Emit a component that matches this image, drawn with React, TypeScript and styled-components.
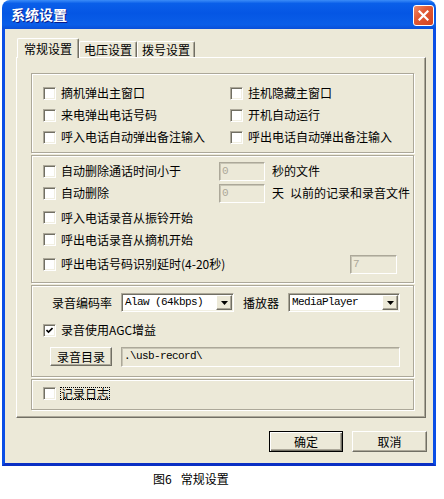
import React from "react";
import styled, { createGlobalStyle } from "styled-components";

const FONT = `"Noto Sans CJK SC", "Liberation Sans", sans-serif`;
const MONO = `"Liberation Mono", "Noto Sans CJK SC", monospace`;
const FACE = "#ece9d8";
const SHADOW = "#aca899";
const DARK = "#716f64";

const Global = createGlobalStyle`
  html, body { margin: 0; padding: 0; background: #fff; }
  body { font-family: ${FONT}; font-size: 12px; color: #000; }
  * { box-sizing: border-box; }
`;

const Page = styled.div`
  width: 444px;
  height: 499px;
  overflow: hidden;
  padding-left: 2px;
`;

const Window = styled.div`
  width: 434px;
  display: flex;
  flex-direction: column;
`;

const TitleBar = styled.div`
  height: 29px;
  display: flex;
  align-items: flex-start;
  justify-content: space-between;
  padding: 5px 2px 0 8px;
  border-radius: 8px 8px 0 0;
  background: linear-gradient(
    to bottom,
    #3b8cf8 0%,
    #0a5fe9 12%,
    #0556e4 45%,
    #0a5ee8 85%,
    #0a4fd8 100%
  );
`;

const Title = styled.span`
  color: #fff;
  font-weight: bold;
  font-size: 14px;
  line-height: 18px;
  margin-left: 1px;
  text-shadow: 1px 1px #0a1a8a;
`;

const CloseButton = styled.div`
  width: 21px;
  height: 21px;
  border: 1px solid #fff;
  border-radius: 3px;
  background: linear-gradient(135deg, #f08a68 0%, #e15a35 40%, #d4431f 100%);
  display: flex;
  align-items: center;
  justify-content: center;
`;

const Frame = styled.div`
  border-left: 3px solid #0a4ee6;
  border-right: 3px solid #0a4ee6;
  border-bottom: 3px solid #0a2fc4;
  background: ${FACE};
`;

const Client = styled.div`
  display: flex;
  flex-direction: column;
  padding: 9px 6px 11px 11px;
  background: ${FACE};
`;

const TabStrip = styled.div`
  display: flex;
  align-items: flex-end;
  height: 19px;
  margin-left: 1px;
  position: relative;
  z-index: 1;
`;

const Tab = styled.div<{ $active?: boolean }>`
  height: ${(p) => (p.$active ? 20 : 16)}px;
  margin-bottom: ${(p) => (p.$active ? -1 : 0)}px;
  padding: 0 ${(p) => (p.$active ? 6 : 4)}px;
  display: flex;
  align-items: center;
  background: ${FACE};
  border-top: 1px solid #fff;
  border-left: 1px solid #fff;
  border-right: 1px solid ${DARK};
  box-shadow: inset -1px 0 ${SHADOW};
  border-radius: 2px 2px 0 0;
  font-size: 12px;
  line-height: 14px;
`;

const Panel = styled.div`
  display: flex;
  flex-direction: column;
  gap: 2px;
  margin-right: 1px;
  padding: 15px 11px 7px 14px;
  border-top: 1px solid #fff;
  border-left: 1px solid #fff;
  border-right: 1px solid ${DARK};
  border-bottom: 1px solid ${DARK};
  box-shadow: inset -1px -1px ${SHADOW};
`;

const Group = styled.div<{ $pad: string }>`
  border: 1px solid ${SHADOW};
  box-shadow: inset 1px 1px #fff, 1px 1px #fff;
  padding: ${(p) => p.$pad};
`;

const GridGroup = styled(Group)`
  display: grid;
  grid-template-columns: 187px 1fr;
  grid-auto-rows: 22px;
`;

const StackGroup = styled(Group)`
  display: flex;
  flex-direction: column;
`;

const Row = styled.div<{ $h: number; $indent?: number; $gap?: number }>`
  height: ${(p) => p.$h}px;
  display: flex;
  align-items: center;
  padding-left: ${(p) => p.$indent ?? 0}px;
  gap: ${(p) => p.$gap ?? 0}px;
`;

const CheckLabel = styled.label<{ $w?: number; $gap?: number }>`
  display: flex;
  align-items: center;
  gap: ${(p) => p.$gap ?? 5}px;
  flex: none;
  width: ${(p) => (p.$w ? `${p.$w}px` : "auto")};
  white-space: nowrap;
  line-height: 14px;
`;

const Box = styled.span`
  width: 13px;
  height: 13px;
  flex: none;
  background: #fff;
  border-top: 1px solid ${SHADOW};
  border-left: 1px solid ${SHADOW};
  border-bottom: 1px solid #fff;
  border-right: 1px solid #fff;
  box-shadow: inset 1px 1px ${DARK}, inset -1px -1px #f1efe2;
  display: flex;
  align-items: center;
  justify-content: center;
`;

const FocusText = styled.span`
  border: 1px dotted #000;
  line-height: 11px;
  padding: 0;
`;

const Text = styled.span<{ $ml?: number }>`
  margin-left: ${(p) => p.$ml ?? 0}px;
  white-space: nowrap;
  line-height: 14px;
`;

const Field = styled.div<{ $w: number; $h?: number; $muted?: boolean }>`
  width: ${(p) => p.$w}px;
  height: ${(p) => p.$h ?? 19}px;
  flex: none;
  background: ${FACE};
  border-top: 1px solid ${SHADOW};
  border-left: 1px solid ${SHADOW};
  border-bottom: 1px solid #fff;
  border-right: 1px solid #fff;
  box-shadow: inset 1px 1px #c8c5b5;
  padding-left: 2px;
  font-family: ${MONO};
  font-size: 11px;
  letter-spacing: -0.6px;
  line-height: 16px;
  color: ${(p) => (p.$muted ? SHADOW : "#000")};
  white-space: pre;
`;

const Select = styled.div<{ $w: number }>`
  width: ${(p) => p.$w}px;
  height: 19px;
  flex: none;
  display: flex;
  align-items: stretch;
  background: #fff;
  border-top: 1px solid ${SHADOW};
  border-left: 1px solid ${SHADOW};
  border-bottom: 1px solid #fff;
  border-right: 1px solid #fff;
  box-shadow: inset 1px 1px ${DARK}, inset -1px -1px #f1efe2;
  padding: 1px;
`;

const SelectText = styled.span`
  flex: 1;
  padding-left: 2px;
  font-family: ${MONO};
  font-size: 11px;
  letter-spacing: -0.6px;
  line-height: 15px;
  white-space: pre;
`;

const DropButton = styled.span`
  width: 16px;
  flex: none;
  background: ${FACE};
  border-top: 1px solid #fff;
  border-left: 1px solid #fff;
  border-right: 1px solid ${DARK};
  border-bottom: 1px solid ${DARK};
  box-shadow: inset -1px -1px ${SHADOW};
  display: flex;
  align-items: center;
  justify-content: center;
`;

const PushButton = styled.div<{ $w: number; $h: number; $default?: boolean }>`
  width: ${(p) => p.$w}px;
  height: ${(p) => p.$h}px;
  flex: none;
  display: flex;
  align-items: center;
  justify-content: center;
  background: ${FACE};
  font-size: 12px;
  line-height: 14px;
  border: 1px solid;
  border-color: ${(p) => (p.$default ? "#000" : `#fff ${DARK} ${DARK} #fff`)};
  box-shadow: ${(p) =>
    p.$default
      ? `inset 1px 1px #fff, inset -1px -1px ${DARK}, inset -2px -2px ${SHADOW}`
      : `inset -1px -1px ${SHADOW}`};
`;

const ButtonRow = styled.div`
  display: flex;
  justify-content: flex-end;
  gap: 9px;
  margin-top: 13px;
`;

const Caption = styled.div`
  margin-top: 6px;
  padding-left: 151px;
  font-size: 12px;
  line-height: 14px;
  white-space: nowrap;
`;

const CaptionNum = styled.span`
  margin-right: 9px;
`;

const Check = ({ checked = false }: { checked?: boolean }) => (
  <Box>
    {checked && (
      <svg width="7" height="7" viewBox="0 0 7 7">
        <polyline points="0.5,3 2.5,5 6.5,1" fill="none" stroke="#000" strokeWidth="1.6" />
      </svg>
    )}
  </Box>
);

const Arrow = () => (
  <svg width="7" height="4" viewBox="0 0 7 4">
    <polygon points="0,0 7,0 3.5,4" fill="#000" />
  </svg>
);

const CheckItem = ({ label, w, checked }: { label: string; w?: number; checked?: boolean }) => (
  <CheckLabel $w={w}>
    <Check checked={checked} />
    {label}
  </CheckLabel>
);

export default function App() {
  return (
    <>
      <Global />
      <Page>
        <Window>
          <TitleBar>
            <Title>系统设置</Title>
            <CloseButton>
              <svg width="11" height="11" viewBox="0 0 11 11">
                <path d="M1.5 1.5 L9.5 9.5 M9.5 1.5 L1.5 9.5" stroke="#fff" strokeWidth="2.2" strokeLinecap="square" />
              </svg>
            </CloseButton>
          </TitleBar>
          <Frame>
            <Client>
              <TabStrip>
                <Tab $active>常规设置</Tab>
                <Tab>电压设置</Tab>
                <Tab>拨号设置</Tab>
              </TabStrip>
              <Panel>
                <GridGroup $pad="8px 0 4px 11px">
                  <CheckItem label="摘机弹出主窗口" />
                  <CheckItem label="挂机隐藏主窗口" />
                  <CheckItem label="来电弹出电话号码" />
                  <CheckItem label="开机自动运行" />
                  <CheckItem label="呼入电话自动弹出备注输入" />
                  <CheckItem label="呼出电话自动弹出备注输入" />
                </GridGroup>

                <StackGroup $pad="4px 0 2px 11px">
                  <Row $h={22}>
                    <CheckItem label="自动删除通话时间小于" w={176} />
                    <Field $w={46} $muted>0</Field>
                    <Text $ml={7}>秒的文件</Text>
                  </Row>
                  <Row $h={22}>
                    <CheckItem label="自动删除" w={176} />
                    <Field $w={46} $muted>0</Field>
                    <Text $ml={7}>天{"\u2002"}以前的记录和录音文件</Text>
                  </Row>
                  <Row $h={27}>
                    <CheckItem label="呼入电话录音从振铃开始" />
                  </Row>
                  <Row $h={17}>
                    <CheckItem label="呼出电话录音从摘机开始" />
                  </Row>
                  <Row $h={32}>
                    <CheckItem label="呼出电话号码识别延时(4-20秒)" w={307} />
                    <Field $w={47} $muted>7</Field>
                  </Row>
                </StackGroup>

                <StackGroup $pad="5px 0 9px 0">
                  <Row $h={23} $indent={20} $gap={9}>
                    <Text>录音编码率</Text>
                    <Select $w={113}>
                      <SelectText>Alaw (64kbps)</SelectText>
                      <DropButton><Arrow /></DropButton>
                    </Select>
                    <Text>播放器</Text>
                    <Select $w={112}>
                      <SelectText>MediaPlayer</SelectText>
                      <DropButton><Arrow /></DropButton>
                    </Select>
                  </Row>
                  <Row $h={32} $indent={11}>
                    <CheckItem label="录音使用AGC增益" checked />
                  </Row>
                  <Row $h={21} $indent={18} $gap={9}>
                    <PushButton $w={62} $h={19}>录音目录</PushButton>
                    <Field $w={279} $h={20}>.\usb-record\</Field>
                  </Row>
                </StackGroup>

                <StackGroup $pad="2px 0 5px 11px">
                  <Row $h={22}>
                    <CheckLabel $gap={4}>
                      <Check />
                      <FocusText>记录日志</FocusText>
                    </CheckLabel>
                  </Row>
                </StackGroup>
              </Panel>
              <ButtonRow>
                <PushButton $w={74} $h={21} $default>确定</PushButton>
                <PushButton $w={75} $h={21}>取消</PushButton>
              </ButtonRow>
            </Client>
          </Frame>
        </Window>
        <Caption>
          <CaptionNum>图6</CaptionNum>常规设置
        </Caption>
      </Page>
    </>
  );
}
